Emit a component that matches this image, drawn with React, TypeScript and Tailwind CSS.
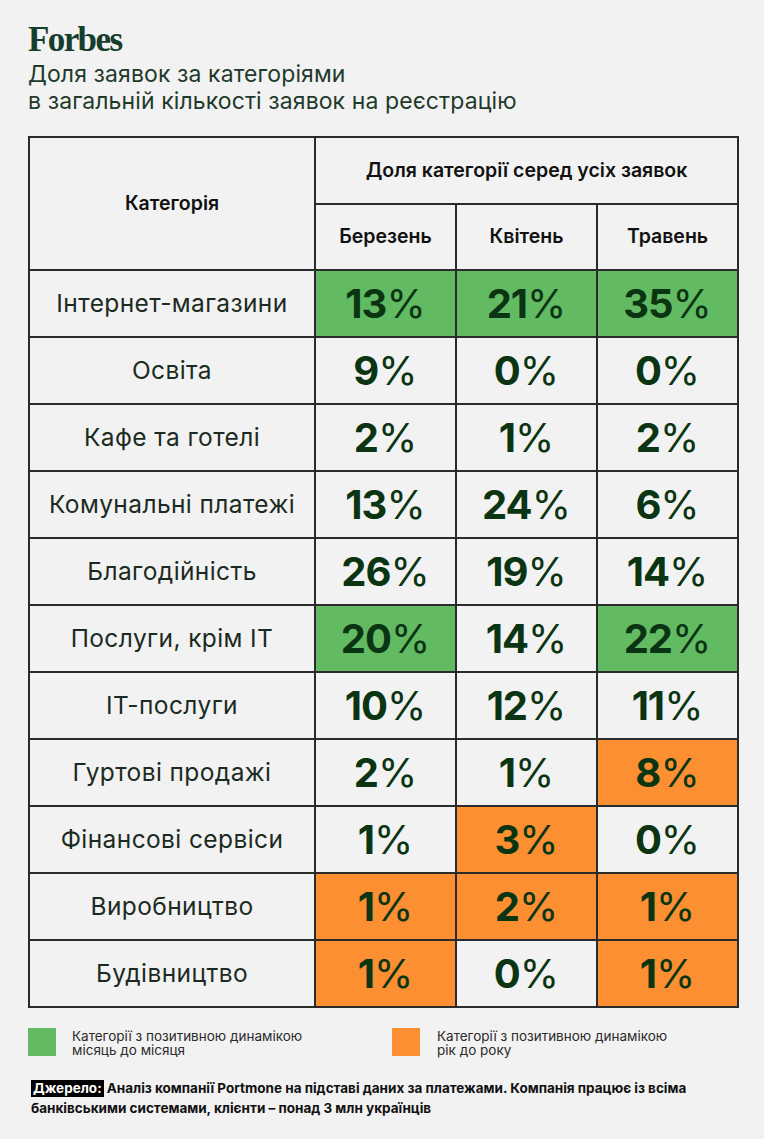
import React from "react";

type Hl = "g" | "o" | "";
const rows: { name: string; v: [string, Hl][] }[] = [
  { name: "Інтернет-магазини", v: [["13", "g"], ["21", "g"], ["35", "g"]] },
  { name: "Освіта", v: [["9", ""], ["0", ""], ["0", ""]] },
  { name: "Кафе та готелі", v: [["2", ""], ["1", ""], ["2", ""]] },
  { name: "Комунальні платежі", v: [["13", ""], ["24", ""], ["6", ""]] },
  { name: "Благодійність", v: [["26", ""], ["19", ""], ["14", ""]] },
  { name: "Послуги, крім ІТ", v: [["20", "g"], ["14", ""], ["22", "g"]] },
  { name: "ІТ-послуги", v: [["10", ""], ["12", ""], ["11", ""]] },
  { name: "Гуртові продажі", v: [["2", ""], ["1", ""], ["8", "o"]] },
  { name: "Фінансові сервіси", v: [["1", ""], ["3", "o"], ["0", ""]] },
  { name: "Виробництво", v: [["1", "o"], ["2", "o"], ["1", "o"]] },
  { name: "Будівництво", v: [["1", "o"], ["0", ""], ["1", "o"]] },
];

const cellB = "border-2 border-[#2b2b2b]";

export default function App() {
  return (
    <div
      className="w-[764px] h-[1139px] bg-[#f2f2f2] px-[28px] pt-[21px]"
      style={{ fontFamily: "Inter, 'Noto Sans', sans-serif" }}
    >
      <div
        className="text-[35px] leading-[38px] font-bold text-[#173d2c] tracking-[-1.6px]"
        style={{ fontFamily: "'Liberation Serif', serif" }}
      >
        Forbes
      </div>
      <div className="mt-[2px] text-[23px] leading-[27px] text-[#1f3a2b] tracking-[0.1px]">
        <div>Доля заявок за категоріями</div>
        <div>в загальній кількості заявок на реєстрацію</div>
      </div>

      <table className="mt-[21px] w-[709px] border-collapse table-fixed">
        <colgroup>
          <col className="w-[286px]" />
          <col className="w-[141px]" />
          <col className="w-[141px]" />
          <col className="w-[141px]" />
        </colgroup>
        <thead>
          <tr className="h-[67px]">
            <th rowSpan={2} className={`${cellB} text-[19.5px] font-semibold text-[#111] text-center align-middle`}>
              Категорія
            </th>
            <th colSpan={3} className={`${cellB} text-[19.5px] font-semibold text-[#111] text-center align-middle`}>
              Доля категорії серед усіх заявок
            </th>
          </tr>
          <tr className="h-[66px]">
            {["Березень", "Квітень", "Травень"].map((m) => (
              <th key={m} className={`${cellB} text-[19.5px] font-semibold text-[#111] text-center align-middle`}>
                {m}
              </th>
            ))}
          </tr>
        </thead>
        <tbody>
          {rows.map((r) => (
            <tr key={r.name} className="h-[67px]">
              <td className={`${cellB} text-[24.5px] text-[#1c2b22] text-center align-middle tracking-[0.4px]`}>
                {r.name}
              </td>
              {r.v.map(([n, h], i) => (
                <td
                  key={i}
                  className={`${cellB} text-center align-middle text-[40px] leading-none text-[#0b3512] ${
                    h === "g" ? "bg-[#62bb63]" : h === "o" ? "bg-[#fd8f33]" : ""
                  }`}
                >
                  <span className="font-bold tracking-[-1px]">{n}</span>
                  <span className="font-normal">%</span>
                </td>
              ))}
            </tr>
          ))}
        </tbody>
      </table>

      <div className="mt-[20px] flex">
        <div className="w-[364px] flex items-start">
          <div className="w-[28px] h-[28px] bg-[#62bb63] shrink-0" />
          <div className="ml-[16px] mt-[1px] text-[13.5px] leading-[14px] text-[#2b2b2b]">
            Категорії з позитивною динамікою
            <br />
            місяць до місяця
          </div>
        </div>
        <div className="flex items-start">
          <div className="w-[28px] h-[28px] bg-[#fd8f33] shrink-0" />
          <div className="ml-[17px] mt-[1px] text-[13.5px] leading-[14px] text-[#2b2b2b]">
            Категорії з позитивною динамікою
            <br />
            рік до року
          </div>
        </div>
      </div>

      <div className="mt-[21px] pl-[3px] text-[13.5px] leading-[20px] font-bold text-[#111]">
        <div className="flex items-center">
          <span className="bg-black text-white px-[2px] mr-[3px] leading-[17px]">Джерело:</span>
          <span>Аналіз компанії Portmone на підставі даних за платежами. Компанія працює із всіма</span>
        </div>
        <div>банківськими системами, клієнти – понад 3 млн українців</div>
      </div>
    </div>
  );
}
